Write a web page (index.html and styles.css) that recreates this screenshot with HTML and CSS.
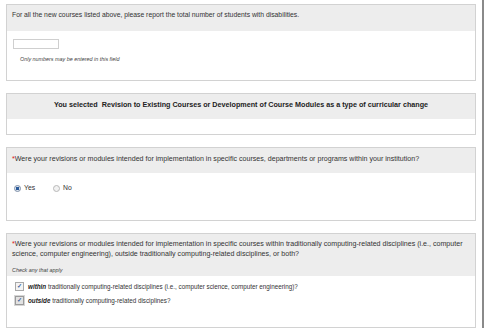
FILE: index.html
```html
<!DOCTYPE html>
<html lang="en">
<head>
    <meta charset="UTF-8">
    <title>Curricular Change Survey</title>
    <link rel="stylesheet" href="styles.css">
</head>
<body>
    <div class="page">
        <div class="question q-count">
            <div class="q-head">
                <p>For all the new courses listed above, please report the total number of students with disabilities.</p>
            </div>
            <div class="q-body">
                <input type="text" class="num-input">
                <p class="hint">Only numbers may be entered in this field</p>
            </div>
        </div>

        <div class="question q-info">
            <div class="q-head">
                <p class="center">You selected &nbsp;Revision to Existing Courses or Development of Course Modules as a type of curricular change</p>
            </div>
            <div class="q-body"></div>
        </div>

        <div class="question q-radio">
            <div class="q-head">
                <p class="ask"><span class="req">*</span>Were your revisions or modules intended for implementation in specific courses, departments or programs within your institution?</p>
            </div>
            <div class="q-body">
                <label class="opt"><span class="radio checked"></span>Yes</label>
                <label class="opt"><span class="radio"></span>No</label>
            </div>
        </div>

        <div class="question q-check">
            <div class="q-head">
                <p class="ask"><span class="req">*</span>Were your revisions or modules intended for implementation in specific courses within traditionally computing-related disciplines (i.e., computer science, computer engineering), outside traditionally computing-related disciplines, or both?</p>
                <p class="hint">Check any that apply</p>
            </div>
            <div class="q-body">
                <label class="chk"><span class="box">&#10003;</span><span><b><i>within</i></b> traditionally computing-related disciplines (i.e., computer science, computer engineering)?</span></label>
                <label class="chk"><span class="box focus">&#10003;</span><span><b><i>outside</i></b> traditionally computing-related disciplines?</span></label>
            </div>
        </div>
    </div>
</body>
</html>
```

FILE: styles.css
```css
html, body {
    margin: 0;
    background: #fff;
}

body {
    font-family: "Liberation Sans", Arial, sans-serif;
    font-size: 6.8px;
    color: #333;
}

p {
    margin: 0;
}

.page {
    width: 484px;
    height: 328px;
    padding: 4px 6px 0 6px;
    box-sizing: border-box;
    border-right: 2px solid #8a8a8a;
    overflow: hidden;
}

.question {
    width: 470px;
    border: 1px solid #d2d2d2;
    box-sizing: border-box;
    margin-bottom: 12px;
}

.q-head {
    background: #ededed;
    padding: 5px 8px 0 5px;
    line-height: 10px;
}

.q-body {
    background: #fff;
}

.ask {
    font-size: 7.1px;
}

.center {
    text-align: center;
    font-weight: bold;
    font-size: 7.2px;
    color: #222;
}

.req {
    color: #e02020;
}

.hint {
    font-size: 5.4px;
    font-style: italic;
    color: #444;
}

/* box 1 */
.q-count .q-head { height: 21px; }
.q-count .q-body {
    height: 49px;
    padding: 8px 0 0 6px;
    box-sizing: border-box;
}
.num-input {
    display: block;
    width: 46px;
    height: 10px;
    box-sizing: border-box;
    border: 1px solid #cfcfcf;
    margin: 0;
    padding: 0;
}
.q-count .hint {
    margin: 7px 0 0 7px;
}

/* box 2 */
.q-info .q-head { height: 19px; padding-top: 6px; padding-right: 5px; }
.q-info .q-body { height: 15px; }

/* box 3 */
.q-radio .q-head { height: 19px; padding-top: 6px; }
.q-radio .q-body {
    height: 47px;
    display: flex;
    gap: 18px;
    padding: 10px 0 0 7px;
    box-sizing: border-box;
}

.opt {
    display: flex;
    align-items: flex-start;
    gap: 3px;
    line-height: 10px;
}

.radio {
    width: 5px;
    height: 5px;
    margin-top: 2px;
    border-radius: 50%;
    border: 1px solid #b8b8b8;
    background: #f2f2f2;
}

.radio.checked {
    background: radial-gradient(circle, #2a5a9a 0 1.6px, #dde6f0 2px);
    border-color: #7d8ea6;
}

/* box 4 */
.q-check .q-head { height: 37px; }
.q-check .q-head .hint { margin-top: 6px; }
.q-check .q-body {
    height: 51px;
    padding: 4px 0 0 8px;
    box-sizing: border-box;
    font-size: 6.3px;
}

.chk {
    display: flex;
    align-items: center;
    gap: 4px;
    height: 12px;
    margin-bottom: 2px;
}

.chk b {
    color: #222;
}

.box {
    width: 7px;
    height: 7px;
    border: 1px solid #a9a9a9;
    background: #f4f4f4;
    color: #3b5f9a;
    font-size: 6px;
    line-height: 7px;
    text-align: center;
    font-weight: bold;
}

.box.focus {
    border-color: #9a9a9a;
    background: #e2e2e2;
    box-shadow: 0 0 0 1px #d6d6d6;
}
```
